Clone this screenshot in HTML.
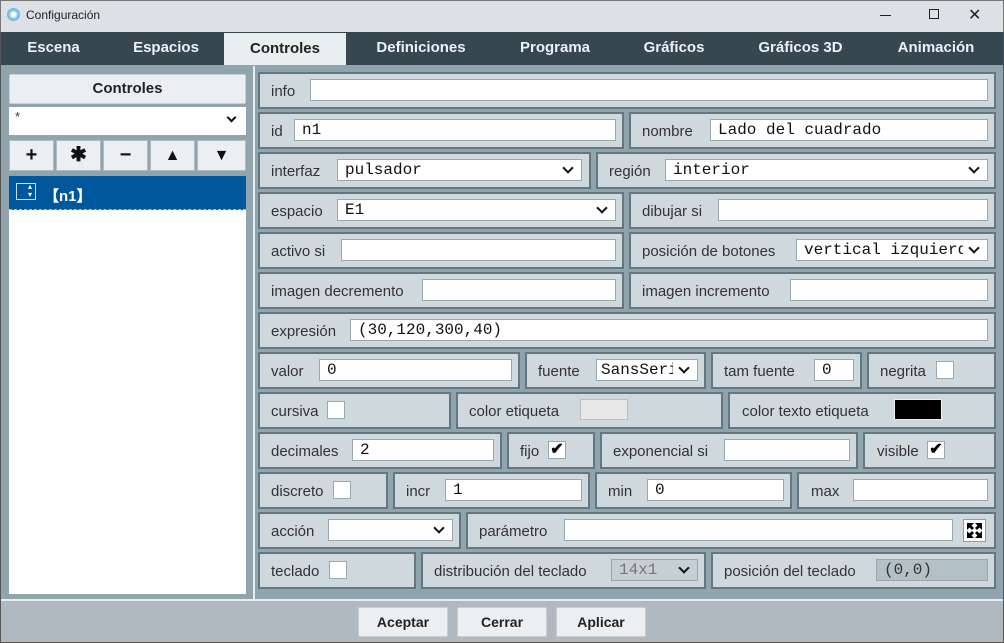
<!DOCTYPE html>
<html><head><meta charset="utf-8"><style>
*{box-sizing:border-box;margin:0;padding:0}
body{width:1004px;height:643px;position:relative;overflow:hidden;background:#b0b9bf;font-family:"Liberation Sans",sans-serif;color:#333}
.a{position:absolute}
.title{left:0;top:0;width:1004px;height:32px;background:#dde1e5;border:1px solid #777;border-bottom:none}
.tabs{left:1px;top:32px;width:1002px;height:33px;background:#36474f}
.tab{position:absolute;top:0;height:33px;line-height:32px;color:#eef;font-weight:bold;font-size:15px;text-align:center}
.main{left:1px;top:65px;width:1002px;height:536px;background:#90a4ae;border-bottom:2px solid #e6ecef}
.c{position:absolute;height:37px;background:#cfd8dc;border:2px solid #62777f}
.l{position:absolute;font-size:15px;line-height:18px;color:#333;margin-top:2px}
.i{position:absolute;height:22px;background:#fff;border:1px solid #9aa9b0;font-family:"Liberation Mono",monospace;font-size:16px;line-height:20px;padding-left:7px;color:#111;white-space:nowrap;overflow:hidden}
.s:after{content:"";position:absolute;right:0;top:0;width:24px;height:20px;background:inherit}
.s:before{content:"";position:absolute;z-index:2;right:9px;top:4px;width:6px;height:6px;border-right:2px solid #111;border-bottom:2px solid #111;transform:rotate(45deg)}
.cb{position:absolute;width:18px;height:18px;background:#fff;border:1px solid #9aa9b0;font-size:16px;line-height:16px;text-align:center;color:#000;font-weight:bold}
.btn{position:absolute;top:607px;width:90px;height:30px;background:#eceff1;border:1px solid #c8cfd3;border-radius:2px;font-weight:bold;font-size:14px;line-height:28px;text-align:center;color:#222}
.lb{position:absolute;top:140px;height:31px;width:45px;background:#eceff1;border:1px solid #b0bcc2;font-size:20px;font-weight:bold;text-align:center;line-height:29px;color:#111}
</style></head><body>
<div class="a title"></div>
<div class="a" style="left:7px;top:8px;width:13px;height:13px;border-radius:50%;background:radial-gradient(circle,#fff 20%,#8cc8ea 45%,#3a9ad6 100%)"></div>
<div class="a" style="left:26px;top:8px;font-size:12px;color:#222">Configuración</div>
<div class="a" style="left:880px;top:15px;width:11px;height:1px;background:#222"></div>
<div class="a" style="left:929px;top:9px;width:10px;height:10px;border:1px solid #222"></div>
<div class="a" style="left:968px;top:5px;font-size:16px;color:#222">✕</div>
<div class="a tabs">
<div class="tab" style="left:0;width:105px">Escena</div>
<div class="tab" style="left:105px;width:120px">Espacios</div>
<div class="tab" style="left:223px;width:122px;top:1px;background:#e9eef0;color:#222">Controles</div>
<div class="tab" style="left:345px;width:150px">Definiciones</div>
<div class="tab" style="left:495px;width:118px">Programa</div>
<div class="tab" style="left:613px;width:120px">Gráficos</div>
<div class="tab" style="left:733px;width:133px">Gráficos 3D</div>
<div class="tab" style="left:866px;width:138px">Animación</div>
</div>
<div class="a main"></div>
<div class="a" style="left:253px;top:66px;width:2px;height:534px;background:#e6ecef"></div>
<div class="a" style="left:9px;top:74px;width:237px;height:30px;background:#eceff1;border:1px solid #c8d0d4;border-radius:2px;text-align:center;font-weight:bold;font-size:15px;line-height:28px;color:#222">Controles</div>
<div class="a" style="left:9px;top:107px;width:237px;height:28px;background:#fff;font-size:13px;padding-left:6px;line-height:20px">*</div>
<div class="a" style="left:228px;top:114px;width:7px;height:7px;border-right:2px solid #111;border-bottom:2px solid #111;transform:rotate(45deg)"></div>
<div class="lb" style="left:9px">+</div>
<div class="lb" style="left:56px">✱</div>
<div class="lb" style="left:103px">−</div>
<div class="lb" style="left:150px;font-size:16px">▲</div>
<div class="lb" style="left:197px;width:49px;font-size:16px">▼</div>
<div class="a" style="left:9px;top:176px;width:237px;height:418px;background:#fff"></div>
<div class="a" style="left:9px;top:176px;width:237px;height:34px;background:#01579b;border-bottom:1px dashed #9cc"></div>
<div class="a" style="left:16px;top:183px;width:20px;height:17px;border:1px solid #cde"></div>
<div class="a" style="left:28px;top:183px;color:#fff;font-size:8px;line-height:8px">▴<br>▾</div>
<div class="a" style="left:44px;top:185px;color:#fff;font-weight:bold;font-size:15px">【n1】</div>

<div class="c" style="left:258px;top:72px;width:738px"></div>
<div class="l" style="left:271px;top:81px">info</div>
<div class="i" style="left:310px;top:79px;width:678px"></div>

<div class="c" style="left:258px;top:112px;width:366px"></div>
<div class="c" style="left:629px;top:112px;width:367px"></div>
<div class="l" style="left:271px;top:121px">id</div>
<div class="i" style="left:294px;top:119px;width:322px">n1</div>
<div class="l" style="left:642px;top:121px">nombre</div>
<div class="i" style="left:710px;top:119px;width:278px">Lado del cuadrado</div>

<div class="c" style="left:258px;top:152px;width:333px"></div>
<div class="c" style="left:596px;top:152px;width:400px"></div>
<div class="l" style="left:271px;top:161px">interfaz</div>
<div class="i s" style="left:337px;top:159px;width:245px">pulsador</div>
<div class="l" style="left:609px;top:161px">región</div>
<div class="i s" style="left:665px;top:159px;width:323px">interior</div>

<div class="c" style="left:258px;top:192px;width:366px"></div>
<div class="c" style="left:629px;top:192px;width:367px"></div>
<div class="l" style="left:271px;top:201px">espacio</div>
<div class="i s" style="left:337px;top:199px;width:279px">E1</div>
<div class="l" style="left:642px;top:201px">dibujar si</div>
<div class="i" style="left:718px;top:199px;width:270px"></div>

<div class="c" style="left:258px;top:232px;width:366px"></div>
<div class="c" style="left:629px;top:232px;width:367px"></div>
<div class="l" style="left:271px;top:241px">activo si</div>
<div class="i" style="left:341px;top:239px;width:275px"></div>
<div class="l" style="left:642px;top:241px">posición de botones</div>
<div class="i s" style="left:796px;top:239px;width:192px">vertical izquierda</div>

<div class="c" style="left:258px;top:272px;width:366px"></div>
<div class="c" style="left:629px;top:272px;width:367px"></div>
<div class="l" style="left:271px;top:281px">imagen decremento</div>
<div class="i" style="left:422px;top:279px;width:194px"></div>
<div class="l" style="left:642px;top:281px">imagen incremento</div>
<div class="i" style="left:790px;top:279px;width:198px"></div>

<div class="c" style="left:258px;top:312px;width:738px"></div>
<div class="l" style="left:271px;top:321px">expresión</div>
<div class="i" style="left:350px;top:319px;width:638px">(30,120,300,40)</div>

<div class="c" style="left:258px;top:352px;width:262px"></div>
<div class="c" style="left:525px;top:352px;width:181px"></div>
<div class="c" style="left:711px;top:352px;width:151px"></div>
<div class="c" style="left:867px;top:352px;width:129px"></div>
<div class="l" style="left:271px;top:361px">valor</div>
<div class="i" style="left:319px;top:359px;width:193px">0</div>
<div class="l" style="left:538px;top:361px">fuente</div>
<div class="i s" style="left:596px;top:359px;width:102px;padding-left:4px">SansSerif</div>
<div class="l" style="left:724px;top:361px">tam fuente</div>
<div class="i" style="left:814px;top:359px;width:40px">0</div>
<div class="l" style="left:880px;top:361px">negrita</div>
<div class="cb" style="left:936px;top:361px"></div>

<div class="c" style="left:258px;top:392px;width:193px"></div>
<div class="c" style="left:456px;top:392px;width:267px"></div>
<div class="c" style="left:728px;top:392px;width:268px"></div>
<div class="l" style="left:271px;top:401px">cursiva</div>
<div class="cb" style="left:327px;top:401px"></div>
<div class="l" style="left:469px;top:401px">color etiqueta</div>
<div class="a" style="left:580px;top:399px;width:48px;height:21px;background:#e8e8e8;border:1px solid #bbb"></div>
<div class="l" style="left:742px;top:401px">color texto etiqueta</div>
<div class="a" style="left:894px;top:399px;width:48px;height:21px;background:#000;border:1px solid #eee"></div>

<div class="c" style="left:258px;top:432px;width:244px"></div>
<div class="c" style="left:507px;top:432px;width:88px"></div>
<div class="c" style="left:600px;top:432px;width:258px"></div>
<div class="c" style="left:863px;top:432px;width:133px"></div>
<div class="l" style="left:271px;top:441px">decimales</div>
<div class="i" style="left:352px;top:439px;width:142px">2</div>
<div class="l" style="left:520px;top:441px">fijo</div>
<div class="cb" style="left:548px;top:441px">✔</div>
<div class="l" style="left:613px;top:441px">exponencial si</div>
<div class="i" style="left:724px;top:439px;width:126px"></div>
<div class="l" style="left:877px;top:441px">visible</div>
<div class="cb" style="left:927px;top:441px">✔</div>

<div class="c" style="left:258px;top:472px;width:130px"></div>
<div class="c" style="left:393px;top:472px;width:197px"></div>
<div class="c" style="left:595px;top:472px;width:197px"></div>
<div class="c" style="left:797px;top:472px;width:199px"></div>
<div class="l" style="left:271px;top:481px">discreto</div>
<div class="cb" style="left:333px;top:481px"></div>
<div class="l" style="left:406px;top:481px">incr</div>
<div class="i" style="left:445px;top:479px;width:137px">1</div>
<div class="l" style="left:608px;top:481px">min</div>
<div class="i" style="left:647px;top:479px;width:137px">0</div>
<div class="l" style="left:811px;top:481px">max</div>
<div class="i" style="left:853px;top:479px;width:135px"></div>

<div class="c" style="left:258px;top:512px;width:203px"></div>
<div class="c" style="left:466px;top:512px;width:530px"></div>
<div class="l" style="left:271px;top:521px">acción</div>
<div class="i s" style="left:328px;top:519px;width:125px"></div>
<div class="l" style="left:479px;top:521px">parámetro</div>
<div class="i" style="left:564px;top:519px;width:389px"></div>
<svg class="a" style="left:963px;top:519px" width="23" height="23" viewBox="0 0 23 23"><rect x="0.5" y="0.5" width="22" height="22" fill="#fff" stroke="#999"/><g fill="#000"><path d="M4 4h7l-2.5 2.5 2.5 2.5-2 2-2.5-2.5L4 11z"/><path d="M19 4v7l-2.5-2.5L14 11l-2-2 2.5-2.5L12 4z"/><path d="M4 19v-7l2.5 2.5L9 12l2 2-2.5 2.5L11 19z"/><path d="M19 19h-7l2.5-2.5L12 14l2-2 2.5 2.5L19 12z"/></g></svg>

<div class="c" style="left:258px;top:552px;width:158px"></div>
<div class="c" style="left:421px;top:552px;width:285px"></div>
<div class="c" style="left:711px;top:552px;width:285px"></div>
<div class="l" style="left:271px;top:561px">teclado</div>
<div class="cb" style="left:329px;top:561px"></div>
<div class="l" style="left:434px;top:561px">distribución del teclado</div>
<div class="i s" style="left:611px;top:559px;width:87px;background:#c5cfd4;color:#777">14x1</div>
<div class="l" style="left:724px;top:561px">posición del teclado</div>
<div class="i" style="left:876px;top:559px;width:112px;background:#b3c0c6;color:#333">(0,0)</div>

<div class="btn" style="left:358px">Aceptar</div>
<div class="btn" style="left:457px">Cerrar</div>
<div class="btn" style="left:556px">Aplicar</div>
<div class="a" style="left:0;top:32px;width:1px;height:611px;background:#555"></div>
<div class="a" style="left:1003px;top:32px;width:1px;height:611px;background:#555"></div>
<div class="a" style="left:0;top:642px;width:1004px;height:1px;background:#555"></div>
</body></html>
